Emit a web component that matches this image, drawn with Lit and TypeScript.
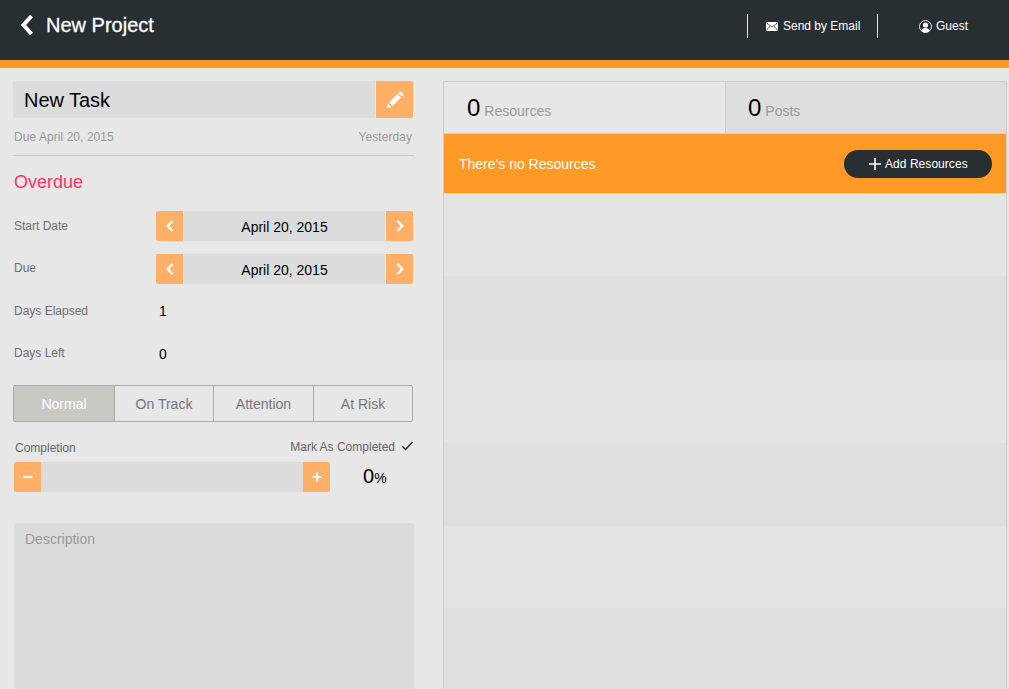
import { LitElement, html, css } from "lit";
import { customElement } from "lit/decorators.js";

const chevL = html`<svg width="10" height="14" viewBox="0 0 10 14"><path d="M7.5 2 L2.8 7 L7.5 12" fill="none" stroke="#fff" stroke-width="2.4"/></svg>`;
const chevR = html`<svg width="10" height="14" viewBox="0 0 10 14"><path d="M2.5 2 L7.2 7 L2.5 12" fill="none" stroke="#fff" stroke-width="2.4"/></svg>`;

@customElement("app-root")
export class AppRoot extends LitElement {
  static styles = css`
    :host { display: block; width: 1009px; height: 689px; overflow: hidden; background: #e7e7e7; font-family: "Liberation Sans", Arial, sans-serif; color: #000; }
    .header { height: 60px; background: #272f32; border-bottom: 8px solid #ff9a26; display: flex; align-items: center; color: #fff; }
    .back { margin-left: 20px; width: 14px; height: 22px; display: flex; margin-top: -11px; }
    .title { margin-left: 12px; font-size: 20px; margin-top: -10px; -webkit-text-stroke: 0.3px #fff; }
    .hright { margin-left: auto; display: flex; align-items: center; height: 24px; margin-top: -8px; font-size: 12px; }
    .email { width: 131px; height: 24px; border-left: 1px solid #e6e6e6; border-right: 1px solid #e6e6e6; display: flex; align-items: center; gap: 5px; padding-left: 18px; box-sizing: border-box; }
    .guest { width: 131px; display: flex; align-items: center; justify-content: center; gap: 5px; }
    .guest span { margin-left: -1px; }
    .main { display: flex; align-items: flex-start; padding-top: 13px; }
    .left { width: 401px; margin-left: 13px; flex: none; }
    .titlebar { display: flex; height: 37px; gap: 1px; }
    .titlefield { flex: 1; background: #dcdcdc; border-radius: 2px 0 0 2px; font-size: 20px; line-height: 38px; padding-left: 11px; letter-spacing: -0.05px; }
    .edit { width: 37px; background: #ffb066; border-radius: 0 2px 2px 0; display: flex; align-items: center; justify-content: center; margin-right: 1px; }
    .meta { display: flex; justify-content: space-between; font-size: 12px; color: #999; padding: 12px 2px 0 1px; line-height: 14px; height: 25px; border-bottom: 1px solid #c9c9c9; letter-spacing: 0.06px; }
    .overdue { color: #ff3366; font-size: 18px; line-height: 20px; margin-top: 16px; padding-left: 1px; }
    .row { display: flex; align-items: center; height: 30px; margin-top: 13px; }
    .row.first { margin-top: 19px; }
    .row.last { margin-top: 12px; }
    .lab { width: 142px; padding-left: 1px; font-size: 12px; color: #6e6e6e; margin-top: -3px; }
    .first .lab { margin-top: -1px; }
    .stepper { display: flex; width: 257px; height: 30px; gap: 1px; font-size: 14px; }
    .btn { width: 27px; flex: none; background: #ffb066; display: flex; align-items: center; justify-content: center; }
    .stepper .btn:first-child { border-radius: 2px 0 0 2px; }
    .stepper .btn:last-child { border-radius: 0 2px 2px 0; }
    .mid { flex: 1; background: #dcdcdc; display: flex; align-items: center; justify-content: center; padding-top: 1px; }
    .val { font-size: 14px; padding-left: 3px; margin-top: -2px; }
    .last .val { margin-top: 0; }
    .seg { display: flex; width: 400px; height: 37px; box-sizing: border-box; border: 1px solid #aaa; border-radius: 2px; margin-top: 16px; font-size: 14px; color: #777; }
    .seg div { display: flex; align-items: center; justify-content: center; border-left: 1px solid #aaa; width: 100px; box-sizing: border-box; }
    .seg div:first-child { border-left: 0; background: #c9c8c3; color: #fff; }
    .seg div:nth-child(2) { width: 99px; }
    .seg div:last-child { flex: 1; }
    .complabels { display: flex; justify-content: space-between; align-items: center; font-size: 12px; color: #666; height: 16px; margin: 16px 0 0 2px; }
    .complabels .c { margin-top: 3px; }
    .mark { display: flex; align-items: center; gap: 6px; margin-top: 1px; }
    .mark svg { margin-top: -2px; }
    .slider { display: flex; align-items: center; height: 30px; margin: 8px 0 0 1px; }
    .track { display: flex; width: 316px; height: 30px; background: #dcdcdc; border-radius: 2px; justify-content: space-between; }
    .track .btn:first-child { border-radius: 2px 0 0 2px; }
    .track .btn:last-child { border-radius: 0 2px 2px 0; }
    .pct { margin-left: 33px; font-size: 20px; line-height: 30px; }
    .pct small { font-size: 14px; }
    .desc { margin: 31px 0 0 1px; width: 400px; height: 200px; background: #dcdcdc; border-radius: 2px 2px 0 0; color: #999; font-size: 14px; padding: 8px 11px; box-sizing: border-box; }
    .right { margin-left: 29px; width: 564px; box-sizing: border-box; border: 1px solid #ccc; flex: none; }
    .tabs { display: flex; height: 51px; border-bottom: 1px solid #d0d0d0; }
    .tab { width: 281px; box-sizing: border-box; padding: 12px 0 0 23px; line-height: 28px; font-size: 12px; }
    .tab b { font-weight: normal; font-size: 24px; }
    .tab span { font-size: 14px; color: #999; margin-left: 4px; }
    .tab.two { flex: 1; background: #dedede; border-left: 1px solid #ccc; padding-left: 22px; }
    .banner { height: 59px; background: #ff9a26; border-bottom: 1px solid #d8d8d8; color: #fff; font-size: 14px; display: flex; align-items: center; justify-content: space-between; padding: 0 14px 0 15px; }
    .add { width: 148px; height: 28px; border-radius: 14px; background: #272f32; display: flex; align-items: center; font-size: 12px; padding-left: 25px; box-sizing: border-box; gap: 4px; letter-spacing: 0.05px; }
    .bands { display: grid; grid-template-rows: 82px 84px 83px 83px 82px 83px; }
    .r { background: #e4e4e4; }
    .r.alt { background: #dfdfdf; }
  `;

  render() {
    const step = html`<div class="stepper"><div class="btn">${chevL}</div><div class="mid">April 20, 2015</div><div class="btn">${chevR}</div></div>`;
    return html`
      <div class="header">
        <div class="back"><svg width="14" height="22" viewBox="0 0 14 22"><path d="M11.5 2 L3.5 11 L11.5 20" fill="none" stroke="#fff" stroke-width="4"/></svg></div>
        <div class="title">New Project</div>
        <div class="hright">
          <div class="email">
            <svg width="12" height="9" viewBox="0 0 12 9"><rect width="12" height="9" rx="1" fill="#fff"/><path d="M0.3 0.8 L6 5 L11.7 0.8 M0.3 8.4 L4.3 3.8 M11.7 8.4 L7.7 3.8" fill="none" stroke="#272f32" stroke-width="0.7"/></svg>
            <span>Send by Email</span>
          </div>
          <div class="guest">
            <svg width="13" height="13" viewBox="0 0 13 13"><circle cx="6.5" cy="6.5" r="6" fill="none" stroke="#fff" stroke-width="0.9"/><circle cx="6.5" cy="5" r="2.6" fill="#fff"/><path d="M2.6 11 C3 8.6 4.8 8 6.5 8 C8.2 8 10 8.6 10.4 11 C9 12.7 4 12.7 2.6 11 Z" fill="#fff"/></svg>
            <span>Guest</span>
          </div>
        </div>
      </div>
      <div class="main">
        <div class="left">
          <div class="titlebar">
            <div class="titlefield">New Task</div>
            <div class="edit"><svg width="18" height="18" viewBox="0 0 18 18"><path d="M1 17 L2 12.4 L5.6 16 Z M3 11.4 L11.4 3 L15 6.6 L6.6 15 Z M12.4 2 L13.6 0.9 C14.1 0.5 14.7 0.5 15.2 0.9 L17.1 2.8 C17.5 3.3 17.5 3.9 17.1 4.4 L16 5.6 Z" fill="#fff"/></svg></div>
          </div>
          <div class="meta"><span>Due April 20, 2015</span><span>Yesterday</span></div>
          <div class="overdue">Overdue</div>
          <div class="row first"><div class="lab">Start Date</div>${step}</div>
          <div class="row"><div class="lab">Due</div>${step}</div>
          <div class="row"><div class="lab">Days Elapsed</div><div class="val">1</div></div>
          <div class="row last"><div class="lab">Days Left</div><div class="val">0</div></div>
          <div class="seg"><div>Normal</div><div>On Track</div><div>Attention</div><div>At Risk</div></div>
          <div class="complabels"><span class="c">Completion</span>
            <span class="mark">Mark As Completed <svg width="13" height="10" viewBox="0 0 13 10"><path d="M1.5 5.5 L4.5 8.5 L11.5 1" fill="none" stroke="#222" stroke-width="1.3"/></svg></span></div>
          <div class="slider">
            <div class="track">
              <div class="btn"><svg width="10" height="10" viewBox="0 0 10 10"><path d="M0.5 5 H9.5" stroke="#fff" stroke-width="2.2"/></svg></div>
              <div class="btn"><svg width="10" height="10" viewBox="0 0 10 10"><path d="M0.5 5 H9.5 M5 0.5 V9.5" stroke="#fff" stroke-width="2.2"/></svg></div>
            </div>
            <div class="pct">0<small>%</small></div>
          </div>
          <div class="desc">Description</div>
        </div>
        <div class="right">
          <div class="tabs">
            <div class="tab"><b>0</b><span>Resources</span></div>
            <div class="tab two"><b>0</b><span>Posts</span></div>
          </div>
          <div class="banner"><span>There's no Resources</span>
            <div class="add"><svg width="12" height="12" viewBox="0 0 12 12"><path d="M0 6 H12 M6 0 V12" stroke="#fff" stroke-width="1.6"/></svg><span>Add Resources</span></div>
          </div>
          <div class="bands"><div class="r"></div><div class="r alt"></div><div class="r"></div><div class="r alt"></div><div class="r"></div><div class="r alt"></div></div>
        </div>
      </div>
    `;
  }
}
